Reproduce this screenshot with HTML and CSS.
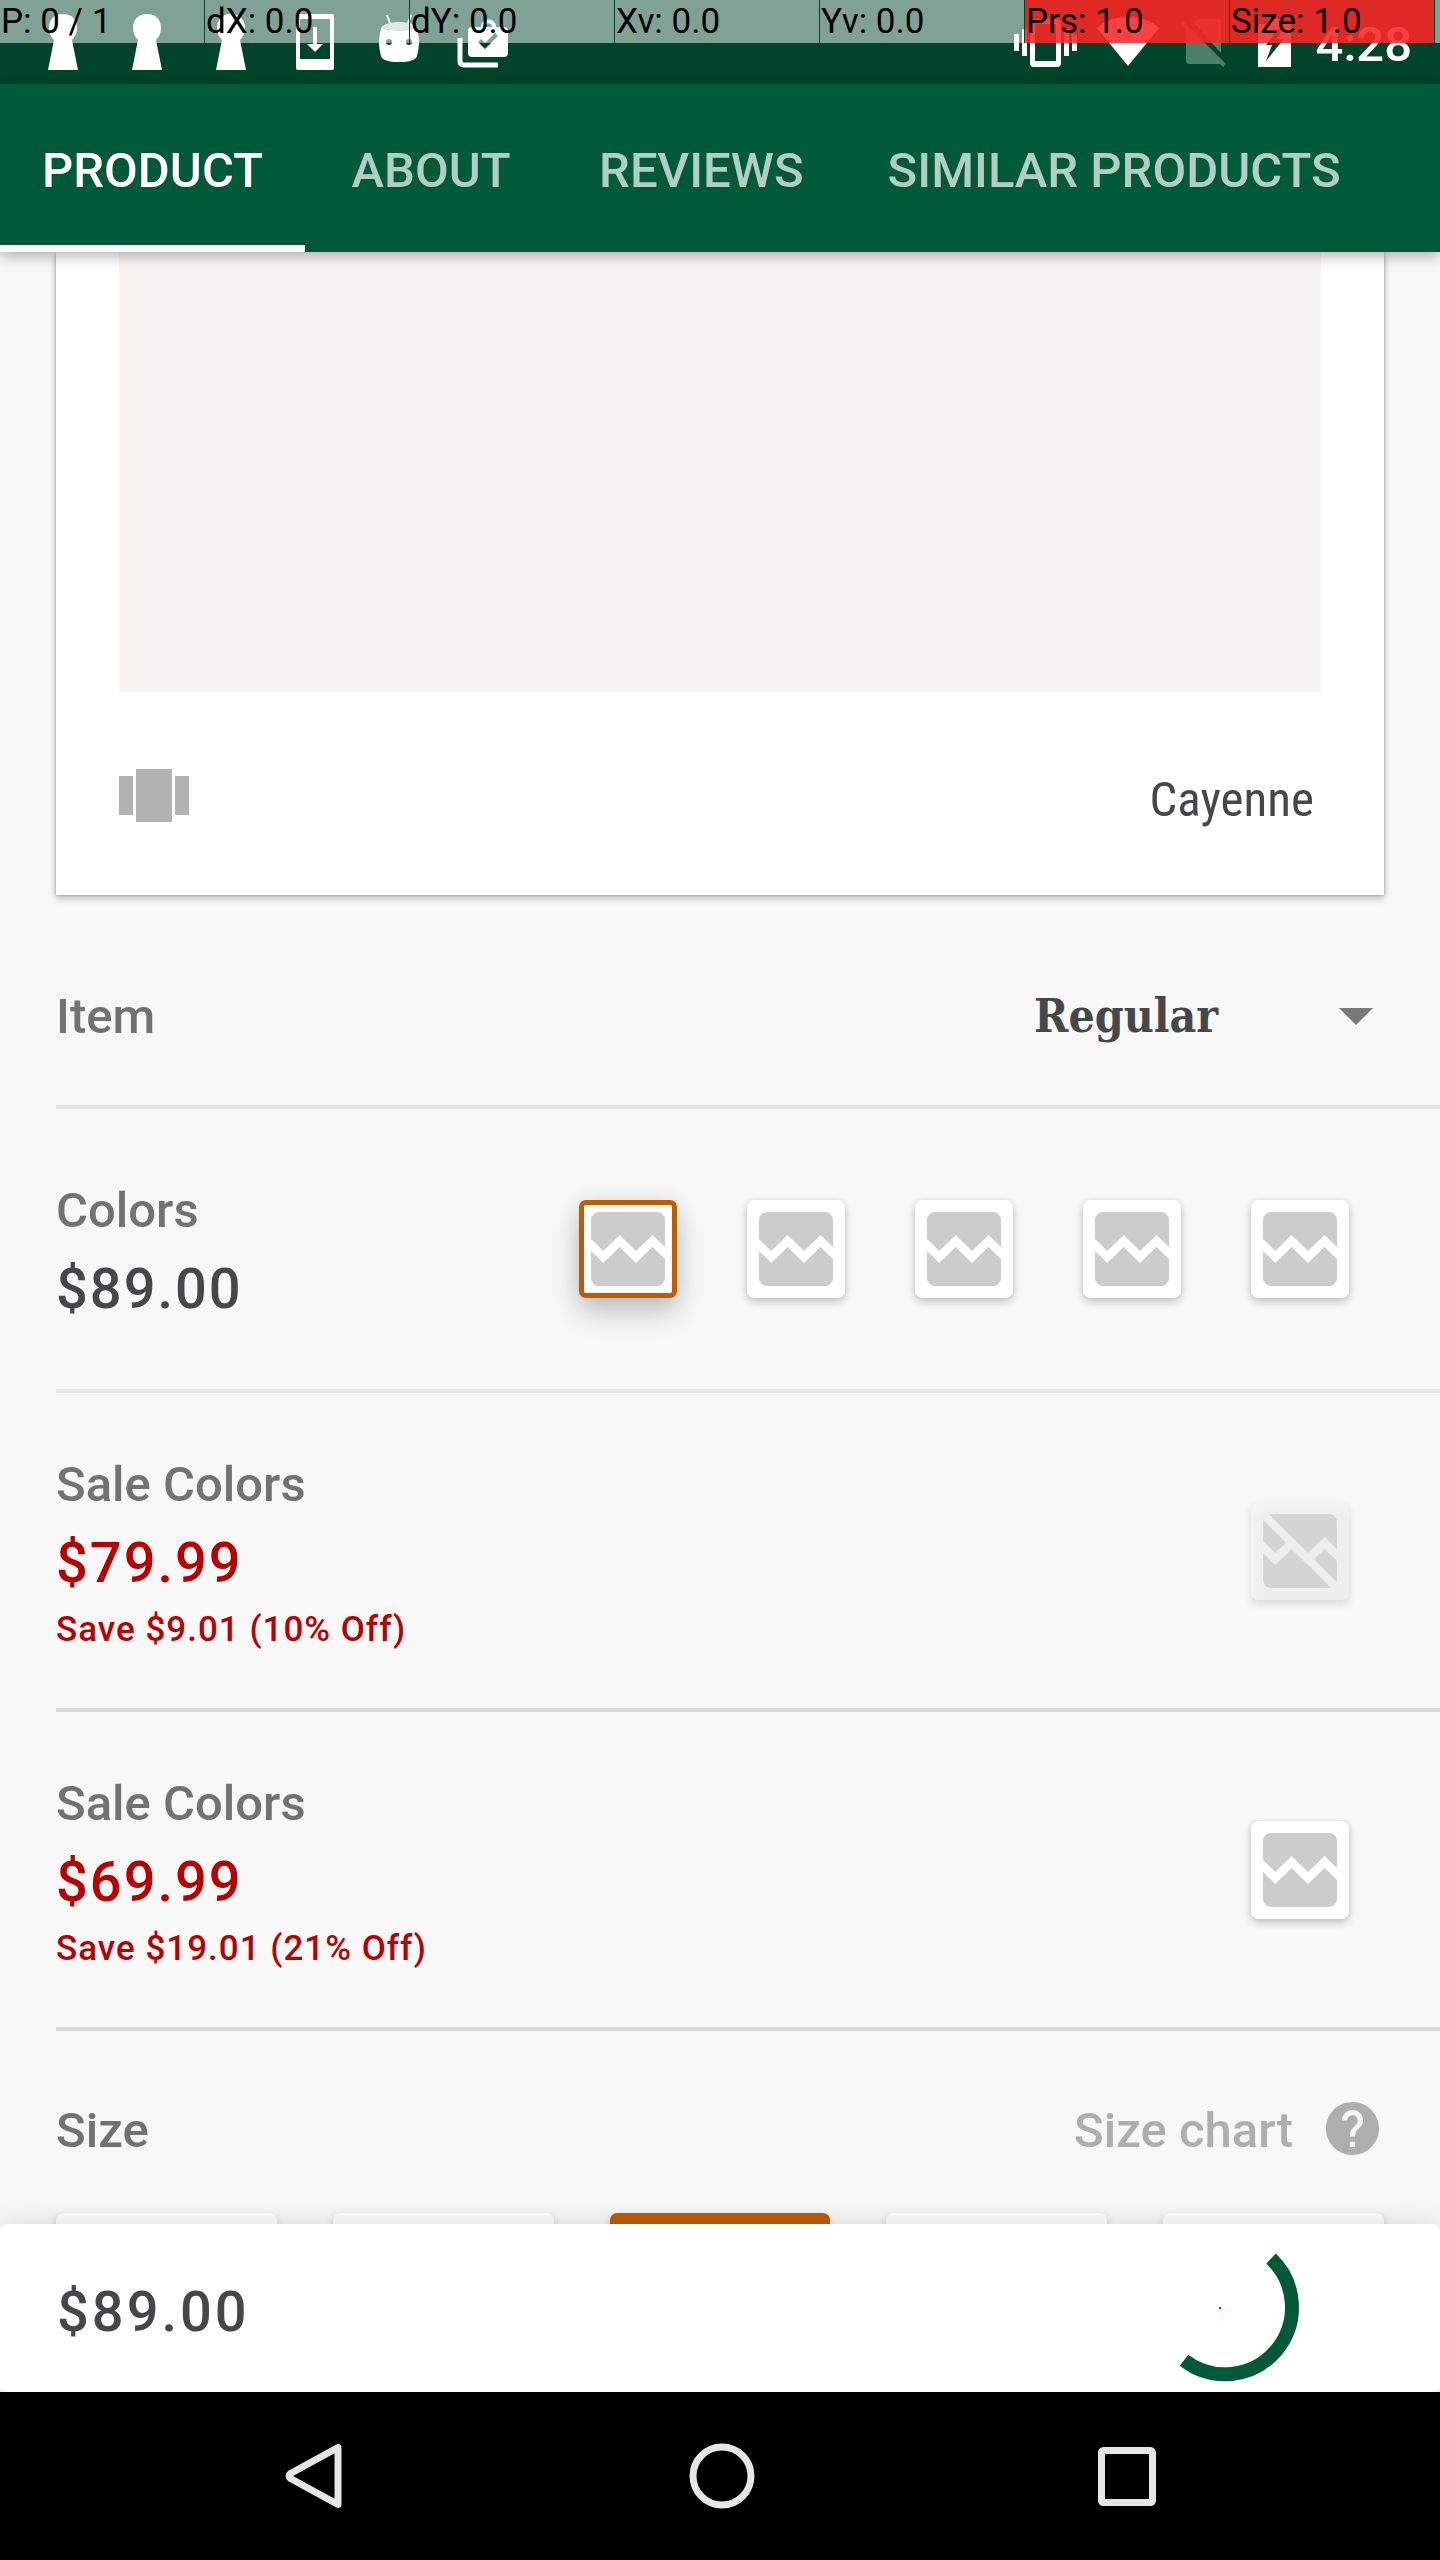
FILE: index.html
```html
<!DOCTYPE html>
<html lang="en">
<head>
<meta charset="utf-8">
<meta name="viewport" content="width=device-width, initial-scale=1">
<title>Product</title>
<link rel="stylesheet" href="styles.css">
</head>
<body>
<svg class="defs" aria-hidden="true">
  <symbol id="broken-image" viewBox="0 0 74 74">
    <path d="M8 0H66A8 8 0 0 1 74 8V35L61.500 23 45 39 28.700 23 12.300 39 0 27V8A8 8 0 0 1 8 0Z"/>
    <path d="M0 39 12.300 51 28.700 35 45 51 61.500 35 74 47V66A8 8 0 0 1 66 74H8A8 8 0 0 1 0 66Z"/>
  </symbol>
  <symbol id="keyhole" viewBox="21 0 84 84">
    <path d="M63 14c9 0 14 6 14 14 0 5-2 9-5 12l6 30H48l6-30c-3-3-5-7-5-12 0-8 5-14 14-14Z"/>
  </symbol>
</svg>

<header class="status">
  <div class="status-notifications">
    <svg class="notification"><use href="#keyhole"/></svg>
    <svg class="notification"><use href="#keyhole"/></svg>
    <svg class="notification"><use href="#keyhole"/></svg>
    <svg class="notification" viewBox="273 0 84 84"><path fill-rule="evenodd" d="M298 14H332Q334 14 334 16V68Q334 70 332 70H298Q296 70 296 68V16Q296 14 298 14ZM300 19V59H330V19ZM313 27H317V44H323L315 52 307 44H313Z"/></svg>
    <svg class="notification" viewBox="357 0 84 84"><path d="M387 15 391 26M411 15 407 26" stroke="#fff" stroke-width="2"/><path fill-rule="evenodd" d="M381 28Q399 33 417 28 421 43 417 56 415 62 399 62 383 62 381 56 377 43 381 28ZM389 39A3 3 0 1 0 389 45A3 3 0 1 0 389 39ZM409 39A3 3 0 1 0 409 45A3 3 0 1 0 409 39Z"/><path fill="#bcd0c8" d="M381 28C385 20 413 20 417 28Q399 33 381 28Z"/></svg>
    <svg class="notification" viewBox="441 0 84 84"><path fill-rule="evenodd" d="M472 27H481C481 17 496 17 496 27H504Q508 27 508 31V53Q508 57 504 57H472Q468 57 468 53V31Q468 27 472 27ZM485 27H492C492 22 485 22 485 27ZM478 42 485 49 498 36 495 33 485 43 481 39Z"/><path d="M460 38V61Q460 65 464 65H498" fill="none" stroke="#fff" stroke-width="5"/></svg>
  </div>
  <div class="status-system">
    <svg class="signal-wide" viewBox="1006 0 80 84"><path fill-rule="evenodd" d="M1033 19H1056Q1060 19 1060 23V63Q1060 67 1056 67H1033Q1029 67 1029 63V23Q1029 19 1033 19ZM1034 24V61H1055V24ZM1013 34H1018V51H1013ZM1021 29H1026V56H1021ZM1063 29H1068V56H1063ZM1071 34H1076V51H1071Z"/></svg>
    <svg class="signal-wide" viewBox="1086 0 80 84"><path d="M1096 28C1112 13 1142 13 1158 28L1127 66Z"/></svg>
    <svg class="signal" viewBox="1166 0 70 84" opacity=".3"><path d="M1192 22 1199 19H1217Q1220 19 1220 22V53ZM1185 27 1220 64H1189Q1185 64 1185 60ZM1180 24 1182 21 1225 64 1222 67Z"/></svg>
    <svg class="signal" viewBox="1236 0 70 84"><path fill-rule="evenodd" d="M1257 24H1267V19H1280V24H1290V67H1257ZM1277 29 1265 45H1271L1265 61 1283 39H1276L1281 29Z"/></svg>
    <time class="clock">4:28</time>
  </div>
  <div class="pointer">
    <span class="pointer-cell">P: 0 / 1</span>
    <span class="pointer-cell">dX: 0.0</span>
    <span class="pointer-cell">dY: 0.0</span>
    <span class="pointer-cell">Xv: 0.0</span>
    <span class="pointer-cell">Yv: 0.0</span>
    <span class="pointer-cell pointer-hot">Prs: 1.0</span>
    <span class="pointer-cell pointer-hot">Size: 1.0</span>
  </div>
</header>

<nav class="tabs">
  <a class="tab tab-active" href="#product">PRODUCT</a>
  <a class="tab" href="#about">ABOUT</a>
  <a class="tab" href="#reviews">REVIEWS</a>
  <a class="tab" href="#similar">SIMILAR PRODUCTS</a>
</nav>

<main class="content" id="product">
  <section class="card">
    <div class="photo"></div>
    <div class="caption">
      <svg class="carousel" viewBox="0 0 70 53"><path d="M0 7H14V46H0ZM17 0H53V53H17ZM56 7H70V46H56Z"/></svg>
      <span class="color-name">Cayenne</span>
    </div>
  </section>

  <section class="row row-item">
    <label class="label" for="item">Item</label>
    <div class="picker">
      <select class="select" id="item"><option>Regular</option></select>
      <svg class="arrow" viewBox="0 0 34 17"><path d="M0 0H34L17 17Z"/></svg>
    </div>
  </section>

  <section class="row">
    <div class="info">
      <h2 class="label">Colors</h2>
      <p class="price">$89.00</p>
    </div>
    <div class="swatches">
      <label class="swatch swatch-selected"><input class="radio" type="radio" name="color" aria-label="Cayenne" checked><svg class="swatch-icon"><use href="#broken-image"/></svg></label>
      <label class="swatch"><input class="radio" type="radio" name="color" aria-label="Color 2"><svg class="swatch-icon"><use href="#broken-image"/></svg></label>
      <label class="swatch"><input class="radio" type="radio" name="color" aria-label="Color 3"><svg class="swatch-icon"><use href="#broken-image"/></svg></label>
      <label class="swatch"><input class="radio" type="radio" name="color" aria-label="Color 4"><svg class="swatch-icon"><use href="#broken-image"/></svg></label>
      <label class="swatch"><input class="radio" type="radio" name="color" aria-label="Color 5"><svg class="swatch-icon"><use href="#broken-image"/></svg></label>
    </div>
  </section>

  <section class="row row-sale">
    <div class="info">
      <h2 class="label">Sale Colors</h2>
      <p class="price sale">$79.99</p>
      <p class="saving sale">Save $9.01 (10% Off)</p>
    </div>
    <div class="swatches">
      <label class="swatch swatch-disabled"><input class="radio" type="radio" name="color" aria-label="Sale color 1" disabled><svg class="swatch-icon" viewBox="0 0 74 74"><use href="#broken-image"/><path class="strike" d="M-4-4 78 78"/></svg></label>
    </div>
  </section>

  <section class="row row-sale">
    <div class="info">
      <h2 class="label">Sale Colors</h2>
      <p class="price sale">$69.99</p>
      <p class="saving sale">Save $19.01 (21% Off)</p>
    </div>
    <div class="swatches">
      <label class="swatch"><input class="radio" type="radio" name="color" aria-label="Sale color 2"><svg class="swatch-icon"><use href="#broken-image"/></svg></label>
    </div>
  </section>

  <section class="size">
    <div class="size-head">
      <h2 class="label">Size</h2>
      <a class="chart" href="#chart"><span class="chart-text">Size chart</span>
        <svg class="help" viewBox="2 2 20 20"><path d="M12 2C6.480 2 2 6.480 2 12s4.480 10 10 10 10-4.480 10-10S17.520 2 12 2zm1 17h-2v-2h2v2zm2.070-7.750l-.9.920C13.450 12.900 13 13.500 13 15h-2v-.5c0-1.100.45-2.100 1.170-2.830l1.240-1.260c.37-.36.59-.86.59-1.410 0-1.100-.9-2-2-2s-2 .9-2 2H8c0-2.210 1.790-4 4-4s4 1.790 4 4c0 .88-.36 1.680-.93 2.250z"/></svg>
      </a>
    </div>
    <div class="sizes">
      <input class="tile" type="radio" name="size" aria-label="Size 1">
      <input class="tile" type="radio" name="size" aria-label="Size 2">
      <input class="tile" type="radio" name="size" aria-label="Size 3" checked>
      <input class="tile" type="radio" name="size" aria-label="Size 4">
      <input class="tile" type="radio" name="size" aria-label="Size 5">
    </div>
  </section>
</main>

<footer class="buy">
  <span class="price total">$89.00</span>
  <svg class="spinner" viewBox="0 0 148 148"><path d="M118 23.600A67 67 0 0 1 31 125.300" fill="none" stroke="#005a38" stroke-width="14"/><path d="M66 72h2v2h-2z" fill="#e00"/></svg>
</footer>

<div class="system-nav">
  <button class="nav-button" aria-label="Back"><svg class="nav-icon" viewBox="0 0 66 66"><path d="M54 4.500V61.500L6.500 35.500Q3.500 33 6.500 30.500Z"/></svg></button>
  <button class="nav-button" aria-label="Home"><svg class="nav-icon" viewBox="0 0 66 66"><circle cx="33" cy="33" r="29"/></svg></button>
  <button class="nav-button" aria-label="Overview"><svg class="nav-icon" viewBox="0 0 66 66"><rect x="7.500" y="7.500" width="51" height="52" rx="2"/></svg></button>
</div>
</body>
</html>
```
FILE: styles.css
```css
* {
  box-sizing: border-box;
}

body {
  display: flex;
  flex-direction: column;
  height: 100vh;
  margin: 0;
  background: #f8f8f8;
  color: #464749;
  font-family: Roboto, sans-serif;
  font-size: 49px;
  font-weight: 500;
  line-height: 58px;
}

h2,
p {
  margin: 0;
  font-size: inherit;
  font-weight: inherit;
}

svg {
  display: block;
  flex: none;
}

.defs {
  position: absolute;
  width: 0;
  height: 0;
}

/* Status bar */
.status {
  position: relative;
  display: flex;
  flex: none;
  justify-content: space-between;
  height: 84px;
  padding: 0 28px 0 21px;
  background: #00452b;
  color: #fff;
  fill: #fff;
}

.status-notifications,
.status-system {
  display: flex;
}

.notification {
  width: 84px;
  height: 84px;
}

.signal-wide {
  width: 80px;
  height: 84px;
}

.signal {
  width: 70px;
  height: 84px;
}

.clock {
  padding: 16px 0 0 9px;
}

.pointer {
  position: absolute;
  inset: 0 0 auto;
  display: grid;
  grid-template-columns: repeat(7, 1fr);
  padding-right: 5px;
  background: rgba(255, 255, 255, .5);
  color: #000;
  font-size: 35px;
  font-weight: 400;
  line-height: 43px;
}

.pointer-cell {
  border-right: 1px solid #00452b;
  padding-left: 1px;
  white-space: nowrap;
}

.pointer-hot {
  background: rgba(255, 0, 0, .75);
}

/* Tabs */
.tabs {
  z-index: 1;
  display: flex;
  flex: none;
  background: #005a38;
  box-shadow: 0 4px 14px rgba(0, 0, 0, .3);
}

.tab {
  min-width: 252px;
  height: 168px;
  padding: 58px 42px 0;
  color: #b2cdc3;
  text-align: center;
  text-decoration: none;
  white-space: nowrap;
}

.tab-active {
  border-bottom: 7px solid #fff;
  color: #fff;
}

/* Scrolling content */
.content {
  flex: 1;
  min-height: 0;
  overflow-y: auto;
  scrollbar-width: none;
}

.card {
  margin: 0 56px;
  padding: 0 63px;
  background: #fff;
  box-shadow: 0 3px 7px rgba(0, 0, 0, .25), 0 0 3px rgba(0, 0, 0, .3);
}

.photo {
  height: 440px;
  background: #f6f5f3;
}

.caption {
  display: flex;
  align-items: center;
  justify-content: space-between;
  height: 203px;
  padding: 4px 7px 0 0;
}

.carousel {
  width: 70px;
  height: 53px;
  fill: #b2b2b2;
}

.color-name {
  padding-top: 8px;
  font-family: "Roboto Condensed", "Liberation Sans Narrow", Roboto, sans-serif;
  font-weight: 400;
}

.row {
  display: flex;
  align-items: center;
  justify-content: space-between;
  min-height: 284px;
  margin-left: 56px;
  padding-right: 56px;
  border-bottom: 4px solid #e4e4e4;
}

.row-item {
  min-height: 214px;
  padding-top: 34px;
}

.row-sale {
  min-height: 319px;
  border-color: #d9d9d9;
}

.label {
  color: #727272;
}

.picker {
  position: relative;
  padding-bottom: 2px;
}

.select {
  display: block;
  width: 350px;
  height: 84px;
  padding: 0;
  border: 0;
  background: none;
  color: #464749;
  font-family: "Roboto Slab", "DejaVu Serif Condensed", "DejaVu Serif", serif;
  font-size: 46px;
  font-weight: 700;
  appearance: none;
}

.arrow {
  position: absolute;
  top: 34px;
  right: 11px;
  width: 34px;
  height: 17px;
  fill: #787878;
  pointer-events: none;
}

.info {
  padding-top: 3px;
}

.info .label {
  line-height: 76px;
}

.price {
  font-size: 56px;
  line-height: 80px;
  letter-spacing: 2px;
}

.total {
  padding-top: 6px;
  letter-spacing: 3px;
}

.saving {
  font-size: 35px;
  line-height: 54px;
  letter-spacing: 1px;
}

.sale {
  color: #b80000;
}

.swatches {
  display: flex;
  gap: 70px;
  padding-right: 35px;
}

.swatch {
  position: relative;
  padding: 12px;
  border-radius: 7px;
  background: #fff;
  box-shadow: 0 4px 8px rgba(0, 0, 0, .2), 0 0 4px rgba(0, 0, 0, .1);
}

.swatch-selected {
  padding: 7px;
  border: 5px solid #bf5c00;
  box-shadow: 0 14px 28px rgba(0, 0, 0, .22), 0 0 20px rgba(0, 0, 0, .08);
}

.swatch-disabled {
  background: #eee;
  box-shadow: 0 4px 8px rgba(0, 0, 0, .12), inset 4px 8px 8px #f5f5f5;
}

.swatch-icon {
  width: 74px;
  height: 74px;
  fill: #ccc;
}

.swatch-disabled .swatch-icon {
  fill: #d4d4d4;
}

.strike {
  stroke: #eee;
  stroke-width: 8px;
}

.radio {
  position: absolute;
  inset: 0;
  margin: 0;
  opacity: 0;
}

/* Size */
.size {
  padding: 68px 56px 56px;
}

.size-head {
  display: flex;
  align-items: center;
  justify-content: space-between;
  height: 58px;
  padding-right: 5px;
}

.size-head .label,
.chart-text {
  padding-top: 6px;
}

.chart {
  display: flex;
  align-items: center;
  gap: 33px;
  color: #aeaeae;
  text-decoration: none;
}

.help {
  width: 53px;
  height: 53px;
  fill: #aeaeae;
}

.sizes {
  display: grid;
  grid-template-columns: repeat(5, 1fr);
  gap: 56px;
  padding-top: 56px;
}

.tile {
  height: 140px;
  margin: 0;
  border-radius: 7px;
  background: #fff;
  box-shadow: 0 4px 8px rgba(0, 0, 0, .2);
  appearance: none;
}

.tile:checked {
  background: #bf5c00;
}

/* Purchase bar */
.buy {
  z-index: 1;
  display: flex;
  flex: none;
  align-items: center;
  justify-content: space-between;
  height: 168px;
  padding: 2px 139px 0 57px;
  border-radius: 7px;
  background: #fff;
  box-shadow: 0 0 28px rgba(0, 0, 0, .14);
}

.spinner {
  width: 148px;
  height: 148px;
}

/* Android navigation */
.system-nav {
  z-index: 2;
  display: grid;
  flex: none;
  grid-template-columns: repeat(3, 1fr);
  height: 168px;
  padding: 0 110px 0 114px;
  background: #000;
}

.nav-button {
  display: flex;
  align-items: center;
  justify-content: center;
  padding: 0;
  border: 0;
  background: none;
}

.nav-icon {
  width: 66px;
  height: 66px;
  fill: none;
  stroke: #e6e6e6;
  stroke-width: 7px;
  stroke-linejoin: round;
}
```
